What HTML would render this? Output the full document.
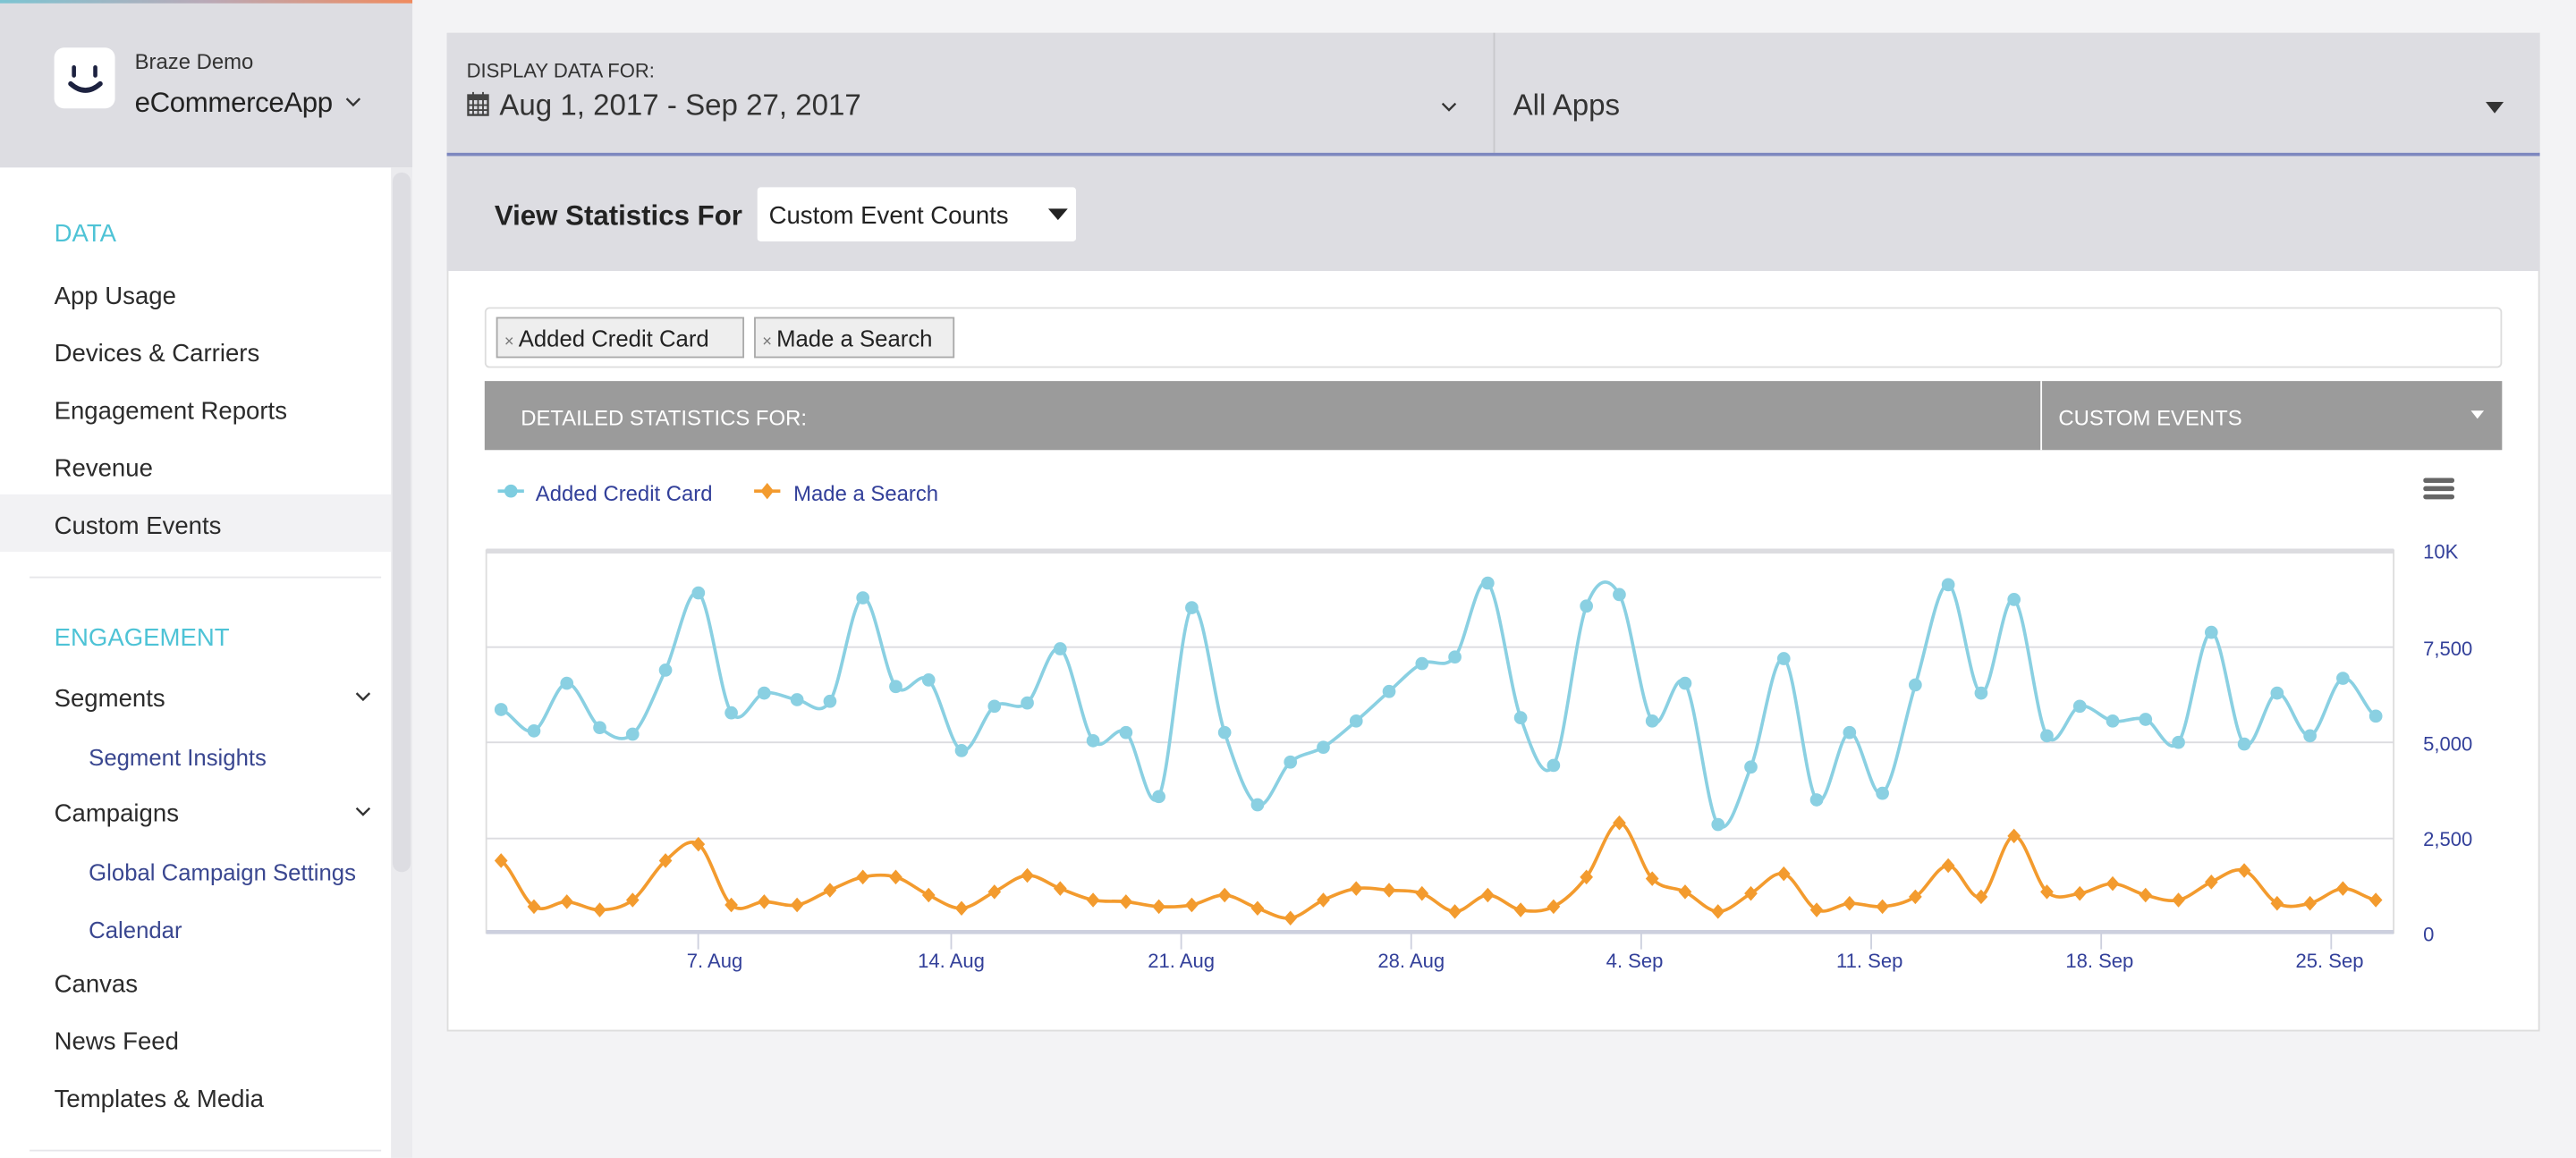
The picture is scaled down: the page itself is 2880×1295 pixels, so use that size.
<!DOCTYPE html>
<html><head><meta charset="utf-8"><style>
*{margin:0;padding:0;box-sizing:border-box}
html,body{width:2880px;height:1294px;overflow:hidden;background:#f3f3f5;font-family:"Liberation Sans",sans-serif}
#w{position:absolute;left:0;top:0;width:1568px;height:705px;transform:scale(1.83673);transform-origin:0 0;background:#f3f3f5}
.a{position:absolute;white-space:nowrap}
.nav{font-size:15px;color:#2b2b2b;left:33px}
.sub{font-size:14px;color:#3a4790;left:54px}
.sec{font-size:15px;color:#4ec3d6;left:33px}
</style></head><body><div id="w">
<!-- sidebar -->
<div class="a" style="left:0;top:0;width:251px;height:705px;background:#fff"></div>
<div class="a" style="left:0;top:0;width:251px;height:102px;background:#dddde2"></div>
<div class="a" style="left:0;top:0;width:251px;height:2px;background:linear-gradient(90deg,#7cc4d2,#b9a9b7,#f08a5d)"></div>
<div class="a" style="left:33px;top:29px;width:37px;height:37px;background:#fff;border-radius:6px"></div>
<svg class="a" style="left:33px;top:29px" width="37" height="37"><path d="M12 12v5M25 12v5" stroke="#1d2240" stroke-width="2.5" stroke-linecap="round"/><path d="M10 22q9 8 18 0" stroke="#1d2240" stroke-width="3" fill="none" stroke-linecap="round"/></svg>
<div class="a" style="left:82px;top:30px;font-size:13px;color:#333">Braze Demo</div>
<div class="a" style="left:82px;top:53px;font-size:17px;color:#222;letter-spacing:-0.2px">eCommerceApp</div>
<svg class="a" style="left:209px;top:58px" width="12" height="8"><path d="M2 2l4 4 4-4" stroke="#333" stroke-width="1.3" fill="none"/></svg>
<div class="a" style="left:238px;top:102px;width:13px;height:603px;background:#ebebee"></div>
<div class="a" style="left:239px;top:105px;width:11px;height:426px;background:#dddde2;border-radius:6px"></div>
<div class="a sec" style="top:134px">DATA</div>
<div class="a nav" style="top:172px">App Usage</div>
<div class="a nav" style="top:207px">Devices &amp; Carriers</div>
<div class="a nav" style="top:242px">Engagement Reports</div>
<div class="a nav" style="top:277px">Revenue</div>
<div class="a" style="left:0;top:301px;width:238px;height:35px;background:#f2f2f4"></div>
<div class="a nav" style="top:312px">Custom Events</div>
<div class="a" style="left:18px;top:351px;width:214px;height:1px;background:#e6e6ea"></div>
<div class="a sec" style="top:380px">ENGAGEMENT</div>
<div class="a nav" style="top:417px">Segments</div>
<svg class="a" style="left:215px;top:420px" width="12" height="8"><path d="M2 2l4 4 4-4" stroke="#333" stroke-width="1.3" fill="none"/></svg>
<div class="a sub" style="top:453px">Segment Insights</div>
<div class="a nav" style="top:487px">Campaigns</div>
<svg class="a" style="left:215px;top:490px" width="12" height="8"><path d="M2 2l4 4 4-4" stroke="#333" stroke-width="1.3" fill="none"/></svg>
<div class="a sub" style="top:523px">Global Campaign Settings</div>
<div class="a sub" style="top:558px">Calendar</div>
<div class="a nav" style="top:591px">Canvas</div>
<div class="a nav" style="top:626px">News Feed</div>
<div class="a nav" style="top:661px">Templates &amp; Media</div>
<div class="a" style="left:18px;top:700px;width:214px;height:1px;background:#e6e6ea"></div>
<!-- main -->
<div class="a" style="left:272px;top:20px;width:1274px;height:608px;background:#fff;border:1px solid #ddd"></div>
<div class="a" style="left:272px;top:20px;width:1274px;height:73px;background:#dddde2"></div>
<div class="a" style="left:909px;top:20px;width:1px;height:73px;background:#c8c8cc"></div>
<div class="a" style="left:272px;top:93px;width:1274px;height:2px;background:#7d87bf"></div>
<div class="a" style="left:284px;top:36px;font-size:12px;color:#333">DISPLAY DATA FOR:</div>
<svg class="a" style="left:284px;top:55px" width="14" height="16"><rect x="1" y="3" width="12" height="12" fill="none" stroke="#444" stroke-width="1.3"/><rect x="1" y="3" width="12" height="3" fill="#444"/><path d="M1 9h12M1 12h12M4 6v9M7 6v9M10 6v9M4 1v3M10 1v3" stroke="#444" stroke-width="1"/></svg>
<div class="a" style="left:304px;top:54px;font-size:18px;color:#333">Aug 1, 2017 - Sep 27, 2017</div>
<svg class="a" style="left:876px;top:61px" width="12" height="8"><path d="M2 2l4 4 4-4" stroke="#333" stroke-width="1.3" fill="none"/></svg>
<div class="a" style="left:921px;top:54px;font-size:18px;color:#333">All Apps</div>
<svg class="a" style="left:1513px;top:62px" width="11" height="7"><path d="M0 0h11L5.5 7z" fill="#333"/></svg>
<div class="a" style="left:272px;top:95px;width:1274px;height:70px;background:#dddde2"></div>
<div class="a" style="left:301px;top:122px;font-size:17px;font-weight:bold;color:#222">View Statistics For</div>
<div class="a" style="left:461px;top:114px;width:194px;height:33px;background:#fff;border-radius:2px"></div>
<div class="a" style="left:468px;top:123px;font-size:15px;color:#222">Custom Event Counts</div>
<svg class="a" style="left:638px;top:127px" width="12" height="7"><path d="M0 0h12L6 7z" fill="#222"/></svg>
<div class="a" style="left:295px;top:187px;width:1228px;height:37px;border:1px solid #ddd;border-radius:3px"></div>
<div class="a" style="left:302px;top:193px;width:151px;height:25px;background:#eee;border:1px solid #aaa"></div>
<div class="a" style="left:307px;top:198px;font-size:14px;color:#222"><span style="font-size:10px;color:#777">× </span>Added Credit Card</div>
<div class="a" style="left:459px;top:193px;width:122px;height:25px;background:#eee;border:1px solid #aaa"></div>
<div class="a" style="left:464px;top:198px;font-size:14px;color:#222"><span style="font-size:10px;color:#777">× </span>Made a Search</div>
<div class="a" style="left:295px;top:232px;width:1228px;height:42px;background:#9b9b9b"></div>
<div class="a" style="left:1242px;top:232px;width:1px;height:42px;background:#fff"></div>
<div class="a" style="left:317px;top:247px;font-size:13px;color:#fff">DETAILED STATISTICS FOR:</div>
<div class="a" style="left:1253px;top:247px;font-size:13px;color:#fff">CUSTOM EVENTS</div>
<svg class="a" style="left:1504px;top:250px" width="8" height="5"><path d="M0 0h8L4 5z" fill="#fff"/></svg>
<svg class="a" style="left:303px;top:292px" width="16" height="14"><path d="M0 7h16" stroke="#7ecde0" stroke-width="2"/><circle cx="8" cy="7" r="4" fill="#7ecde0"/></svg>
<div class="a" style="left:326px;top:293px;font-size:13px;color:#33409a">Added Credit Card</div>
<svg class="a" style="left:459px;top:292px" width="16" height="14"><path d="M0 7h16" stroke="#f39b2e" stroke-width="2"/><path d="M8 2l4 5-4 5-4-5z" fill="#f39b2e"/></svg>
<div class="a" style="left:483px;top:293px;font-size:13px;color:#33409a">Made a Search</div>
<svg class="a" style="left:1475px;top:291px" width="19" height="14"><rect y="0" width="19" height="3" rx="1.5" fill="#666"/><rect y="5" width="19" height="3" rx="1.5" fill="#666"/><rect y="10" width="19" height="3" rx="1.5" fill="#666"/></svg>
<svg id="ch" class="a" style="left:0;top:0" width="1568" height="705">
<rect x="296" y="335" width="1161" height="233" fill="none" stroke="#ddd" stroke-width="1"/>
<path d="M296 335.5h1161" stroke="#dcdce0" stroke-width="3"/>
<path d="M296 394h1161M296 452h1161M296 510.5h1161" stroke="#dcdce0" stroke-width="1"/>
<path d="M296 567.5h1161" stroke="#cdd0de" stroke-width="2.5"/>
<g stroke="#cdd0de" stroke-width="1"><path d="M425 568v10M579 568v10M719 568v10M859 568v10M999 568v10M1139 568v10M1279 568v10M1419 568v10"/></g>
<g font-size="12" fill="#33409a" font-family="Liberation Sans,sans-serif">
<text x="1475" y="340">10K</text><text x="1475" y="399">7,500</text><text x="1475" y="457">5,000</text><text x="1475" y="515">2,500</text><text x="1475" y="573">0</text>
<g text-anchor="middle"><text x="435" y="589">7. Aug</text><text x="579" y="589">14. Aug</text><text x="719" y="589">21. Aug</text><text x="859" y="589">28. Aug</text><text x="995" y="589">4. Sep</text><text x="1138" y="589">11. Sep</text><text x="1278" y="589">18. Sep</text><text x="1418" y="589">25. Sep</text></g>
</g>
</svg>
</div>
<script>
var B=[432,445,416,443,447,408,361,434,422,426,427,364,418,414,457,430,428,395,451,446,485,370,446,490,464,455,439,421,404,400,355,437,466,369,362,439,416,502,467,401,487,446,483,417,356,422,365,448,430,439,438,452,385,453,422,448,413,436];
var O=[524,552,549,554,548,524,514,551,549,551,542,534,534,545,553,543,533,541,548,549,552,551,545,553,559,548,541,542,544,555,545,554,552,534,501,535,543,555,544,532,554,550,552,546,527,546,509,543,544,538,545,548,537,530,550,550,541,548];
var svg=document.getElementById('ch'),NS='http://www.w3.org/2000/svg';
function px(i){return 305+i*20.02}
function path(Y){var d='M'+px(0)+' '+Y[0];for(var i=0;i<Y.length-1;i++){var y0=Y[Math.max(0,i-1)],y1=Y[i],y2=Y[i+1],y3=Y[Math.min(Y.length-1,i+2)];var x1=px(i),x2=px(i+1);d+=' C'+(x1+20/3)+' '+(y1+(y2-y0)/6)+' '+(x2-20/3)+' '+(y2-(y3-y1)/6)+' '+x2+' '+y2;}return d}
function add(Y,c,dia){var p=document.createElementNS(NS,'path');p.setAttribute('d',path(Y));p.setAttribute('fill','none');p.setAttribute('stroke',c);p.setAttribute('stroke-width','2');svg.appendChild(p);
Y.forEach(function(y,i){var e;if(dia){e=document.createElementNS(NS,'path');var x=px(i);e.setAttribute('d','M'+x+' '+(y-4.5)+'L'+(x+4)+' '+y+'L'+x+' '+(y+4.5)+'L'+(x-4)+' '+y+'Z');}else{e=document.createElementNS(NS,'circle');e.setAttribute('cx',px(i));e.setAttribute('cy',y);e.setAttribute('r','4');}e.setAttribute('fill',c);svg.appendChild(e);});}
add(B,'#8ad0e2',false);add(O,'#f39b2e',true);
</script>
</body></html>
